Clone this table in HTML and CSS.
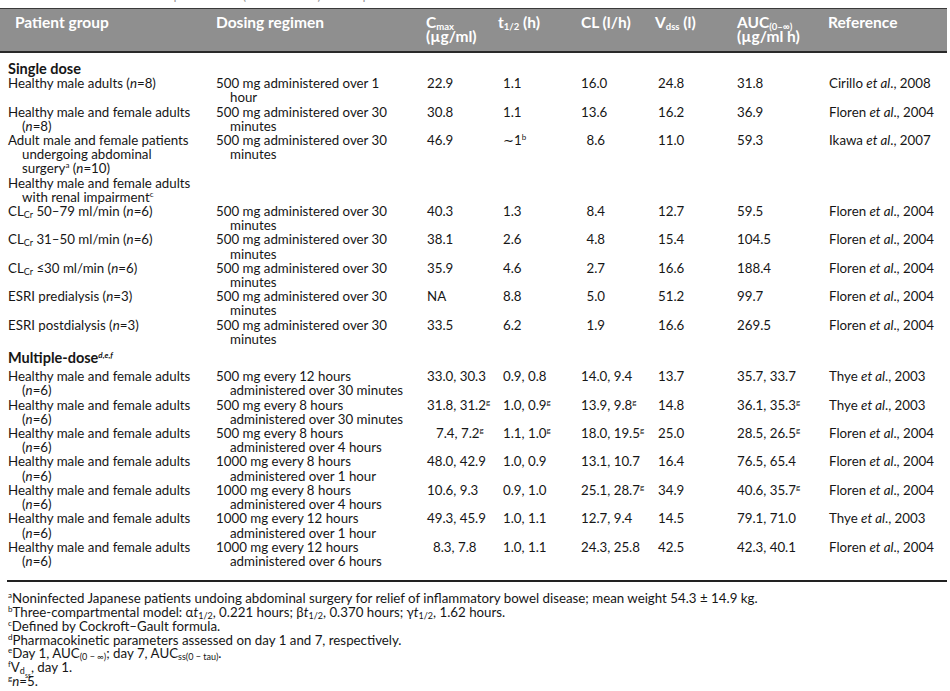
FILE: index.html
```html
<!DOCTYPE html>
<html lang="en">
<head>
<meta charset="utf-8">
<title>Pharmacokinetic parameters</title>
<link rel="stylesheet" href="styles.css">
</head>
<body>
<div class="caption"><span>Table 2 Pharmacokinetic parameters (mean values) of doripenem in adults</span></div>
<table class="pk">
  <colgroup>
    <col class="c1"><col class="c2"><col class="c3"><col class="c4"><col class="c5"><col class="c6"><col class="c7"><col class="c8">
  </colgroup>
  <thead>
    <tr>
      <th class="h-grp">Patient group</th>
      <th>Dosing regimen</th>
      <th>C<span class="hsub">max</span><br>(µg/ml)</th>
      <th>t<span class="hsub">1/2</span> (h)</th>
      <th>CL (l/h)</th>
      <th>V<span class="hsub">dss</span> (l)</th>
      <th>AUC<span class="hsub">(0–∞)</span><br>(µg/ml h)</th>
      <th>Reference</th>
    </tr>
  </thead>
  <tbody>
    <tr class="section first"><td colspan="8">Single dose</td></tr>
    <tr>
      <td class="grp">Healthy male adults (<i>n</i>=8)</td>
      <td class="dose">500 mg administered over 1<br>hour</td>
      <td class="cmax">22.9</td><td class="t">1.1</td><td class="cl-r">16.0</td><td class="v">24.8</td><td class="auc-r">31.8</td>
      <td class="ref">Cirillo <i>et al</i>., 2008</td>
    </tr>
    <tr>
      <td class="grp">Healthy male and female adults<br>(<i>n</i>=8)</td>
      <td class="dose">500 mg administered over 30<br>minutes</td>
      <td class="cmax">30.8</td><td class="t">1.1</td><td class="cl-r">13.6</td><td class="v">16.2</td><td class="auc-r">36.9</td>
      <td class="ref">Floren <i>et al</i>., 2004</td>
    </tr>
    <tr>
      <td class="grp">Adult male and female patients<br>undergoing abdominal<br>surgery<sup>a</sup> (<i>n</i>=10)</td>
      <td class="dose">500 mg administered over 30<br>minutes</td>
      <td class="cmax">46.9</td><td class="t">∼1<sup>b</sup></td><td class="cl-r">8.6</td><td class="v">11.0</td><td class="auc-r">59.3</td>
      <td class="ref">Ikawa <i>et al</i>., 2007</td>
    </tr>
    <tr>
      <td class="grp">Healthy male and female adults<br>with renal impairment<sup>c</sup></td>
      <td></td><td></td><td></td><td></td><td></td><td></td><td></td>
    </tr>
    <tr>
      <td class="grp">CL<span class="sub">Cr</span> 50–79 ml/min (<i>n</i>=6)</td>
      <td class="dose">500 mg administered over 30<br>minutes</td>
      <td class="cmax">40.3</td><td class="t">1.3</td><td class="cl-r">8.4</td><td class="v">12.7</td><td class="auc-r">59.5</td>
      <td class="ref">Floren <i>et al</i>., 2004</td>
    </tr>
    <tr>
      <td class="grp">CL<span class="sub">Cr</span> 31–50 ml/min (<i>n</i>=6)</td>
      <td class="dose">500 mg administered over 30<br>minutes</td>
      <td class="cmax">38.1</td><td class="t">2.6</td><td class="cl-r">4.8</td><td class="v">15.4</td><td class="auc-r">104.5</td>
      <td class="ref">Floren <i>et al</i>., 2004</td>
    </tr>
    <tr>
      <td class="grp">CL<span class="sub">Cr</span> ≤30 ml/min (<i>n</i>=6)</td>
      <td class="dose">500 mg administered over 30<br>minutes</td>
      <td class="cmax">35.9</td><td class="t">4.6</td><td class="cl-r">2.7</td><td class="v">16.6</td><td class="auc-r">188.4</td>
      <td class="ref">Floren <i>et al</i>., 2004</td>
    </tr>
    <tr>
      <td class="grp">ESRI predialysis (<i>n</i>=3)</td>
      <td class="dose">500 mg administered over 30<br>minutes</td>
      <td class="cmax">NA</td><td class="t">8.8</td><td class="cl-r">5.0</td><td class="v">51.2</td><td class="auc-r">99.7</td>
      <td class="ref">Floren <i>et al</i>., 2004</td>
    </tr>
    <tr>
      <td class="grp">ESRI postdialysis (<i>n</i>=3)</td>
      <td class="dose">500 mg administered over 30<br>minutes</td>
      <td class="cmax">33.5</td><td class="t">6.2</td><td class="cl-r">1.9</td><td class="v">16.6</td><td class="auc-r">269.5</td>
      <td class="ref">Floren <i>et al</i>., 2004</td>
    </tr>
    <tr class="section second"><td colspan="8">Multiple-dose<sup class="it">d,e,f</sup></td></tr>
    <tr>
      <td class="grp">Healthy male and female adults<br>(<i>n</i>=6)</td>
      <td class="dose">500 mg every 12 hours<br>administered over 30 minutes</td>
      <td class="cmax">33.0, 30.3</td><td class="t">0.9, 0.8</td><td class="cl">14.0, 9.4</td><td class="v">13.7</td><td class="auc">35.7, 33.7</td>
      <td class="ref">Thye <i>et al</i>., 2003</td>
    </tr>
    <tr>
      <td class="grp">Healthy male and female adults<br>(<i>n</i>=6)</td>
      <td class="dose">500 mg every 8 hours<br>administered over 30 minutes</td>
      <td class="cmax">31.8, 31.2<sup>g</sup></td><td class="t">1.0, 0.9<sup>g</sup></td><td class="cl">13.9, 9.8<sup>g</sup></td><td class="v">14.8</td><td class="auc">36.1, 35.3<sup>g</sup></td>
      <td class="ref">Thye <i>et al</i>., 2003</td>
    </tr>
    <tr>
      <td class="grp">Healthy male and female adults<br>(<i>n</i>=6)</td>
      <td class="dose">500 mg every 8 hours<br>administered over 4 hours</td>
      <td class="cmax pad">7.4, 7.2<sup>g</sup></td><td class="t">1.1, 1.0<sup>g</sup></td><td class="cl">18.0, 19.5<sup>g</sup></td><td class="v">25.0</td><td class="auc">28.5, 26.5<sup>g</sup></td>
      <td class="ref">Floren <i>et al</i>., 2004</td>
    </tr>
    <tr>
      <td class="grp">Healthy male and female adults<br>(<i>n</i>=6)</td>
      <td class="dose">1000 mg every 8 hours<br>administered over 1 hour</td>
      <td class="cmax">48.0, 42.9</td><td class="t">1.0, 0.9</td><td class="cl">13.1, 10.7</td><td class="v">16.4</td><td class="auc">76.5, 65.4</td>
      <td class="ref">Floren <i>et al</i>., 2004</td>
    </tr>
    <tr>
      <td class="grp">Healthy male and female adults<br>(<i>n</i>=6)</td>
      <td class="dose">1000 mg every 8 hours<br>administered over 4 hours</td>
      <td class="cmax">10.6, 9.3</td><td class="t">0.9, 1.0</td><td class="cl">25.1, 28.7<sup>g</sup></td><td class="v">34.9</td><td class="auc">40.6, 35.7<sup>g</sup></td>
      <td class="ref">Floren <i>et al</i>., 2004</td>
    </tr>
    <tr>
      <td class="grp">Healthy male and female adults<br>(<i>n</i>=6)</td>
      <td class="dose">1000 mg every 12 hours<br>administered over 1 hour</td>
      <td class="cmax">49.3, 45.9</td><td class="t">1.0, 1.1</td><td class="cl">12.7, 9.4</td><td class="v">14.5</td><td class="auc">79.1, 71.0</td>
      <td class="ref">Thye <i>et al</i>., 2003</td>
    </tr>
    <tr>
      <td class="grp">Healthy male and female adults<br>(<i>n</i>=6)</td>
      <td class="dose">1000 mg every 12 hours<br>administered over 6 hours</td>
      <td class="cmax pad-s">8.3, 7.8</td><td class="t">1.0, 1.1</td><td class="cl">24.3, 25.8</td><td class="v">42.5</td><td class="auc">42.3, 40.1</td>
      <td class="ref">Floren <i>et al</i>., 2004</td>
    </tr>
  </tbody>
</table>
<div class="notes">
  <p><sup>a</sup>Noninfected Japanese patients undoing abdominal surgery for relief of inflammatory bowel disease; mean weight 54.3 ± 14.9 kg.</p>
  <p><sup>b</sup>Three-compartmental model: α<i>t</i><span class="sub">1/2</span>, 0.221 hours; β<i>t</i><span class="sub">1/2</span>, 0.370 hours; γ<i>t</i><span class="sub">1/2</span>, 1.62 hours.</p>
  <p><sup>c</sup>Defined by Cockroft–Gault formula.</p>
  <p><sup>d</sup>Pharmacokinetic parameters assessed on day 1 and 7, respectively.</p>
  <p><sup>e</sup>Day 1, AUC<span class="sub">(0 − ∞)</span>; day 7, AUC<span class="sub">ss(0 − tau)</span>.</p>
  <p><sup>f</sup>V<span class="sub">d<span class="subsub">ss</span></span>, day 1.</p>
  <p><sup>g</sup><i>n</i>=5.</p>
  <p class="after">Abbreviations: ESRI, end-stage renal impairment; NA, not available; CL<span class="sub">Cr</span>, creatinine clearance.</p>
</div>
</body>
</html>
```

FILE: styles.css
```css
html, body {
  margin: 0;
  padding: 0;
  background: #ffffff;
}

body {
  font-family: Lato, "Open Sans", "Liberation Sans", sans-serif;
  font-size: 13.3px;
  color: #161616;
  width: 950px;
  overflow: hidden;
}

.caption {
  height: 8px;
  overflow: hidden;
  color: #9a9a9a;
}

.caption span {
  display: block;
  margin-top: -12px;
  padding-left: 28px;
  line-height: 14px;
}

table.pk {
  width: 947px;
  table-layout: fixed;
  border-collapse: collapse;
}

col.c1 { width: 216px; }
col.c2 { width: 210px; }
col.c3 { width: 72px; }
col.c4 { width: 83px; }
col.c5 { width: 74px; }
col.c6 { width: 82px; }
col.c7 { width: 91px; }
col.c8 { width: 119px; }

thead tr {
  background: #8f8f8f;
  border-top: 1px solid #3a3a3a;
  border-bottom: 2px solid #2a2a2a;
}

th {
  color: #ffffff;
  font-weight: 700;
  font-size: 15.5px;
  text-align: left;
  vertical-align: top;
  line-height: 14px;
  padding: 6px 0 8px 0;
  white-space: nowrap;
}

th.h-grp {
  padding-left: 15px;
}

.hsub {
  font-size: 9.5px;
  vertical-align: -2px;
  line-height: 0;
}

td {
  vertical-align: top;
  padding: 0;
  line-height: 14.2px;
  white-space: nowrap;
}

tr.section td {
  font-weight: 700;
  font-size: 14.5px;
  padding-left: 8px;
}

tr.section.first td { padding-top: 9px; }
tr.section.second td { padding-top: 5px; padding-bottom: 4px; }

td.grp {
  padding-left: 22px;
  text-indent: -14px;
}

td.dose {
  padding-left: 14px;
  text-indent: -14px;
}

td.cmax { padding-left: 1px; }
td.cmax.pad { padding-left: 10px; }
td.cmax.pad-s { padding-left: 7px; }
td.t { padding-left: 5px; }
td.cl { padding-left: 0; }
td.cl-r { text-align: right; padding-right: 50px; }
td.v { padding-left: 3px; }
td.auc { padding-left: 0; }
td.auc-r { text-align: right; padding-right: 66px; }
td.ref { padding-left: 1px; }

sup {
  font-size: 8px;
  line-height: 0;
  vertical-align: 5px;
}

sup.it { font-style: italic; }

.sub {
  font-size: 9px;
  line-height: 0;
  vertical-align: -2px;
}

.subsub {
  font-size: 7px;
  vertical-align: -4px;
}

.notes {
  margin: 12px 3px 0 7px;
  border-top: 2px solid #222222;
  padding-top: 10px;
}

.notes p {
  margin: 0;
  padding-left: 1px;
  line-height: 13.8px;
  white-space: nowrap;
}

.notes p.after {
  margin-top: 2px;
  padding-left: 530px;
  white-space: normal;
}
```
